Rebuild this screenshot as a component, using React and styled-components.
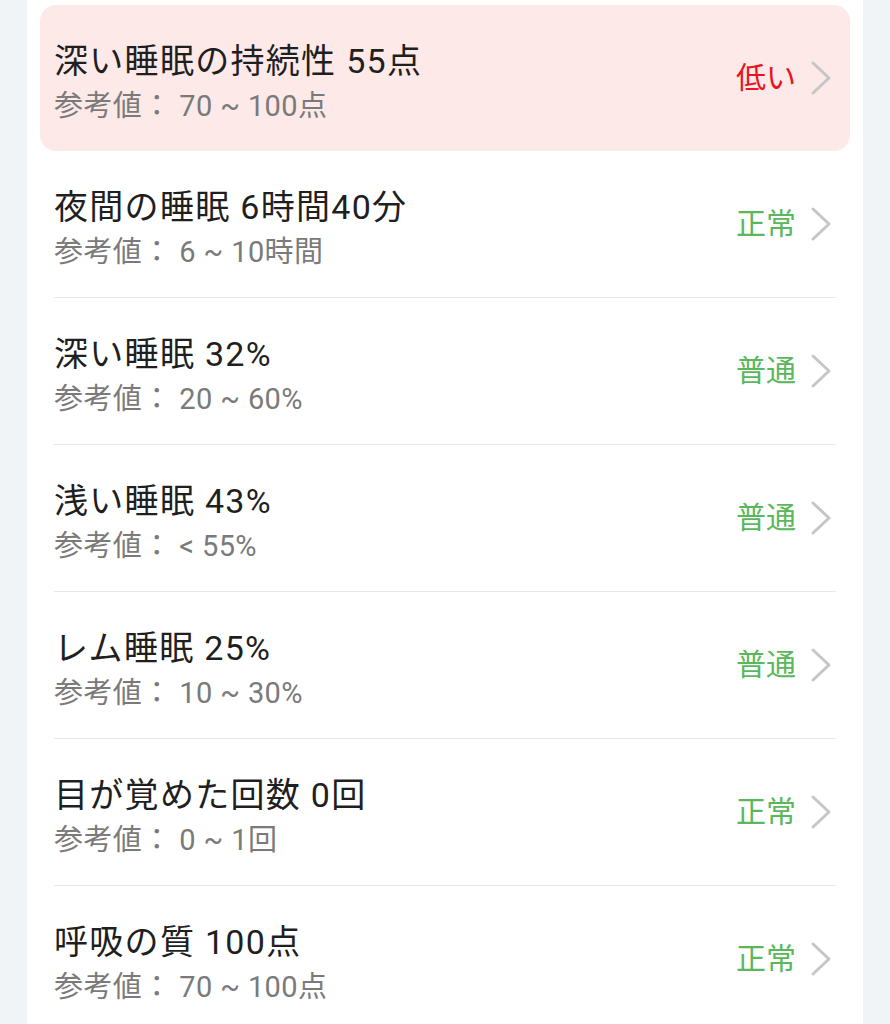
import React from "react";
import styled, { createGlobalStyle } from "styled-components";

const GlobalStyle = createGlobalStyle`
  html, body {
    margin: 0;
    padding: 0;
    background: #f1f4f6;
  }
  body {
    font-family: Roboto, "Noto Sans CJK JP", "Noto Sans", sans-serif;
  }
`;

const Page = styled.div`
  padding: 0 27px;
  height: 1024px;
  overflow: hidden;
`;

const Card = styled.div`
  background: #ffffff;
  padding: 5px 13px 0;
  min-height: 100%;
`;

const Row = styled.div`
  display: flex;
  align-items: center;
  height: 146px;
  padding: 0 18px 0 14px;
  border-radius: 16px;
  background: ${(p) => (p.$alert ? "#fce9e8" : "transparent")};
`;

const Divider = styled.div`
  height: 1px;
  margin: 0 14px;
  background: #e8e8e8;
`;

const Texts = styled.div`
  flex: 1;
  display: flex;
  flex-direction: column;
  gap: 8px;
  padding-top: 7px;
`;

const Title = styled.div`
  font-size: 34px;
  line-height: 40px;
  color: #1f1f1f;
  letter-spacing: 1.3px;
`;

const Sub = styled.div`
  font-size: 29px;
  line-height: 34px;
  color: #7a7a7a;
  white-space: pre;
  letter-spacing: 0.4px;
`;

const Status = styled.div`
  font-size: 30px;
  line-height: 36px;
  color: ${(p) => (p.$alert ? "#e8141e" : "#5bb75b")};
  margin-right: 14px;
`;

const Chevron = () => (
  <svg width="22" height="36" viewBox="0 0 22 36" fill="none">
    <path d="M3 3 L19 18 L3 33" stroke="#c6c6c6" strokeWidth="3" strokeLinecap="round" strokeLinejoin="round" />
  </svg>
);

const items = [
  { title: "深い睡眠の持続性 55点", sub: "参考値： 70 ~ 100点", status: "低い", alert: true },
  { title: "夜間の睡眠 6時間40分", sub: "参考値： 6 ~ 10時間", status: "正常" },
  { title: "深い睡眠 32%", sub: "参考値： 20 ~ 60%", status: "普通" },
  { title: "浅い睡眠 43%", sub: "参考値： < 55%", status: "普通" },
  { title: "レム睡眠 25%", sub: "参考値： 10 ~ 30%", status: "普通" },
  { title: "目が覚めた回数 0回", sub: "参考値： 0 ~ 1回", status: "正常" },
  { title: "呼吸の質 100点", sub: "参考値： 70 ~ 100点", status: "正常" },
];

const App = () => {
  return (
    <>
      <GlobalStyle />
      <Page>
        <Card>
          {items.map((it, i) => (
            <React.Fragment key={it.title}>
              {i > 1 && <Divider />}
              <Row $alert={it.alert}>
                <Texts>
                  <Title>{it.title}</Title>
                  <Sub>{it.sub}</Sub>
                </Texts>
                <Status $alert={it.alert}>{it.status}</Status>
                <Chevron />
              </Row>
            </React.Fragment>
          ))}
        </Card>
      </Page>
    </>
  );
};

export default App;
